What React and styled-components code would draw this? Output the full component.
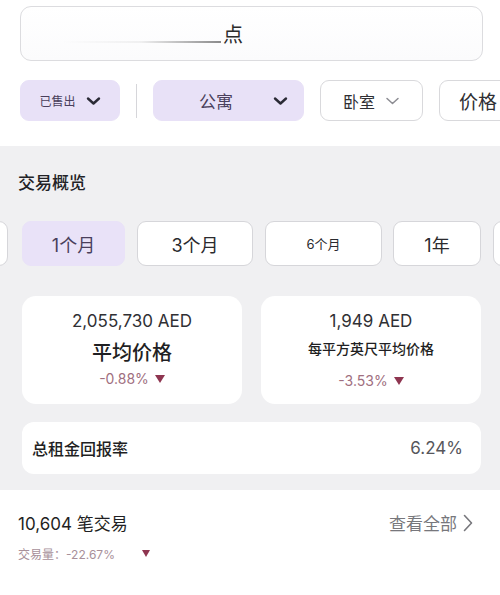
import styled, { createGlobalStyle } from "styled-components";

const Global = createGlobalStyle`
    html, body {
        margin: 0;
        padding: 0;
        background: #ffffff;
        font-family: Inter, "Noto Sans CJK SC", sans-serif;
        color: #2a2a2e;
    }
`

const Page = styled("div")`
    width: 500px;
    height: 595px;
    overflow: hidden;
    background: #ffffff;
`

const Top = styled("div")`
    padding: 6px 17px 0 20px;
`

const SearchBox = styled("div")`
    height: 53px;
    border: 1px solid #dcdcdf;
    border-radius: 11px;
    display: flex;
    align-items: center;
    padding-left: 200px;
    font-size: 20px;
    color: #2b2b2b;
    background: linear-gradient(180deg, #ffffff 0%, #fbfbfc 100%);
`

const Smear = styled("span")`
    width: 160px;
    height: 2px;
    margin-left: -160px;
    margin-right: 2px;
    margin-top: 16px;
    background: linear-gradient(90deg, rgba(0,0,0,0) 0%, rgba(0,0,0,0.05) 50%, rgba(0,0,0,0.45) 100%);
`

const FilterRow = styled("div")`
    display: flex;
    align-items: center;
    gap: 16px;
    margin-top: 19px;
    height: 41px;
    white-space: nowrap;
`

const Chip = styled("div")`
    flex: 0 0 auto;
    box-sizing: border-box;
    width: ${p => p.$w}px;
    height: 41px;
    border-radius: 9px;
    display: flex;
    align-items: center;
    justify-content: ${p => p.$spread ? "space-between" : p.$start ? "flex-start" : "center"};
    gap: 10px;
    padding: ${p => p.$spread ? "0 15px 0 45px" : p.$start ? "0 0 0 19px" : "0 12px"};
    background: ${p => p.$active ? "#e8e1f7" : "#ffffff"};
    border: 1px solid ${p => p.$active ? "#e8e1f7" : "#d9d9dc"};
    font-size: ${p => p.$fs || 16}px;
    color: ${p => p.$active ? "#4a3f5c" : "#2f2f33"};
`

const Divider = styled("div")`
    width: 1px;
    height: 34px;
    background: #d6d6da;
    flex: 0 0 auto;
`

const Chevron = ({ light }) => (
    <svg width="15" height="10" viewBox="0 0 15 10" fill="none">
        <path
            d="M2 2.5 L7.5 7.5 L13 2.5"
            stroke={light ? "#8c8c92" : "#2a2a35"}
            strokeWidth={light ? 1.5 : 2.4}
            strokeLinecap="round"
            strokeLinejoin="round"
        />
    </svg>
)

const Gray = styled("div")`
    margin-top: 25px;
    background: #f0f0f2;
    padding: 23px 0 16px;
`

const SectionTitle = styled("div")`
    padding-left: 18px;
    font-size: 17px;
    font-weight: 500;
    color: #222226;
`

const PeriodTrack = styled("div")`
    display: flex;
    gap: 12px;
    margin: 27px 0 0 -92px;
    white-space: nowrap;
`

const Period = styled("div")`
    flex: 0 0 auto;
    box-sizing: border-box;
    width: ${p => p.$w}px;
    margin-left: ${p => p.$ml || 0}px;
    height: 45px;
    border-radius: 9px;
    display: flex;
    align-items: center;
    justify-content: center;
    background: ${p => p.$active ? "#e9e2f8" : "#ffffff"};
    border: 1px solid ${p => p.$active ? "#e9e2f8" : "#d6d6da"};
    font-size: ${p => p.$fs || 18}px;
    color: ${p => p.$active ? "#4a3f5c" : "#2a2a2e"};
`

const Cards = styled("div")`
    display: grid;
    grid-template-columns: 220px 220px;
    gap: 19px;
    padding: 30px 19px 0 22px;
`

const Card = styled("div")`
    height: 108px;
    background: #ffffff;
    border-radius: 14px;
    display: flex;
    flex-direction: column;
    align-items: center;
    padding-top: 14px;
    box-sizing: border-box;
`

const Amount = styled("div")`
    font-size: 17px;
    color: #303034;
    line-height: 22px;
`

const Label = styled("div")`
    font-size: ${p => p.$small ? 14 : 20}px;
    font-weight: 500;
    color: #1f1f23;
    margin-top: ${p => p.$small ? 5 : 7}px;
    line-height: ${p => p.$small ? 24 : 28}px;
`

const Change = styled("div")`
    display: flex;
    align-items: center;
    gap: 6px;
    font-size: 14px;
    color: #a06f80;
    margin-top: ${p => p.$gap}px;
`

const Down = styled("span")`
    display: inline-block;
    width: 0;
    height: 0;
    margin-left: ${p => p.$ml || 0}px;
    border-left: ${p => p.$s || 5}px solid transparent;
    border-right: ${p => p.$s || 5}px solid transparent;
    border-top: ${p => (p.$s || 5) + 3}px solid #8e3550;
`

const YieldRow = styled("div")`
    margin: 18px 19px 0 22px;
    height: 52px;
    background: #ffffff;
    border-radius: 12px;
    display: flex;
    align-items: center;
    justify-content: space-between;
    padding: 0 18px 0 10px;
`

const YieldLabel = styled("div")`
    font-size: 16px;
    font-weight: 500;
    color: #1f1f23;
`

const YieldValue = styled("div")`
    font-size: 17px;
    color: #56565b;
`

const Deals = styled("div")`
    padding: 20px 27px 0 18px;
`

const DealsHead = styled("div")`
    display: flex;
    justify-content: space-between;
    align-items: center;
`

const DealsTitle = styled("div")`
    font-size: 17px;
    color: #1f1f23;
`

const SeeAll = styled("div")`
    display: flex;
    align-items: center;
    gap: 6px;
    font-size: 17px;
    color: #77777c;
`

const Volume = styled("div")`
    display: flex;
    align-items: center;
    margin-top: 10px;
    font-size: 12px;
    color: #a8909a;
`

const App = () => {
    return (
        <Page>
            <Global />
            <Top>
                <SearchBox>
                    <Smear />
                    点
                </SearchBox>
                <FilterRow>
                    <Chip $w={100} $active $fs={12}>
                        已售出 <Chevron />
                    </Chip>
                    <Divider />
                    <Chip $w={151} $active $spread $fs={17}>
                        公寓 <Chevron />
                    </Chip>
                    <Chip $w={103} $fs={16}>
                        卧室 <Chevron light />
                    </Chip>
                    <Chip $w={100} $fs={19} $start>
                        价格
                    </Chip>
                </FilterRow>
            </Top>

            <Gray>
                <SectionTitle>交易概览</SectionTitle>
                <PeriodTrack>
                    <Period $w={100} />
                    <Period $w={103} $ml={2} $active>1个月</Period>
                    <Period $w={116}>3个月</Period>
                    <Period $w={117} $fs={13}>6个月</Period>
                    <Period $w={88} $ml={-1}>1年</Period>
                    <Period $w={100} />
                </PeriodTrack>

                <Cards>
                    <Card>
                        <Amount>2,055,730 AED</Amount>
                        <Label>平均价格</Label>
                        <Change $gap={3}>-0.88% <Down /></Change>
                    </Card>
                    <Card>
                        <Amount>1,949 AED</Amount>
                        <Label $small>每平方英尺平均价格</Label>
                        <Change $gap={11}>-3.53% <Down /></Change>
                    </Card>
                </Cards>

                <YieldRow>
                    <YieldLabel>总租金回报率</YieldLabel>
                    <YieldValue>6.24%</YieldValue>
                </YieldRow>
            </Gray>

            <Deals>
                <DealsHead>
                    <DealsTitle>10,604 笔交易</DealsTitle>
                    <SeeAll>
                        查看全部
                        <svg width="10" height="18" viewBox="0 0 10 18" fill="none">
                            <path d="M1.5 1.5 L8.5 9 L1.5 16.5" stroke="#77777c" strokeWidth="1.6" strokeLinecap="round" strokeLinejoin="round" />
                        </svg>
                    </SeeAll>
                </DealsHead>
                <Volume>
                    交易量：-22.67%
                    <Down $s={4} $ml={27} />
                </Volume>
            </Deals>
        </Page>
    );
};

export default App;
